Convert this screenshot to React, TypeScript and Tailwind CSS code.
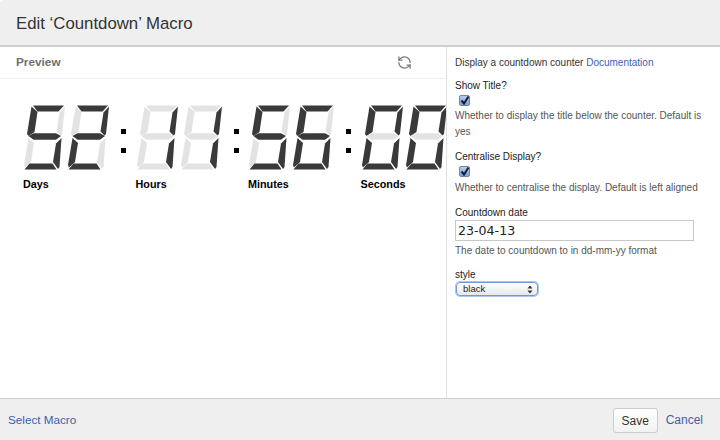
import React from "react";
import { RefreshCcw } from "lucide-react";

const SEG: Record<string, string> = {
  a: "9,0.5 40,0.5 34.5,6.5 13.5,6.5",
  f: "7.5,1.5 13.5,7 10.5,27 4.5,31 3,29",
  b: "41,1.5 35.5,7.5 32.5,26.5 36.5,30.5 38,29",
  g: "4.5,31 9.5,28.2 32,28.2 37,31 32,34.8 9.5,34.8",
  e: "4.5,33 10,38 7,57 1,62.5 0,60",
  c: "37.5,33 32,38.5 29,57 34,64 35.5,62",
  d: "0.5,64.5 5.5,58.5 28.5,58.5 32.5,64.5",
};
const DIGITS: Record<string, string> = {
  "0": "abcdef",
  "1": "bc",
  "2": "abged",
  "5": "afgcd",
  "6": "afgecd",
};

function Digit({ value }: { value: string }) {
  const on = DIGITS[value];
  return (
    <svg width="41" height="65" viewBox="0 0 41 65" className="shrink-0">
      {Object.keys(SEG).map((k) => (
        <polygon key={k} points={SEG[k]} fill={on.includes(k) ? "#3a3a3a" : "#e3e3e3"} />
      ))}
    </svg>
  );
}

function Group({ value, label, colon }: { value: string; label: string; colon: boolean }) {
  return (
    <div className="flex shrink-0 w-[112.5px]">
      <div className="w-[88px] shrink-0">
        <div className="flex gap-[3px]">
          <Digit value={value[0]} />
          <Digit value={value[1]} />
        </div>
        <div className="mt-[7px] -ml-px text-[10.8px] leading-[14px] font-bold text-black">{label}</div>
      </div>
      {colon && (
        <div className="flex flex-col shrink-0 w-[24.5px] pl-[9px] pt-[24px] gap-[14px]">
          <div className="w-[5px] h-[5px] bg-black" />
          <div className="w-[5px] h-[5px] bg-black" />
        </div>
      )}
    </div>
  );
}

function Check() {
  return (
    <div className="ml-1 w-[11px] h-[11px] rounded-[2px] border border-[#6f86b0] bg-gradient-to-b from-[#b9cbe8] to-[#7f9fd4] flex items-center justify-center">
      <svg width="11" height="11" viewBox="0 0 11 11" className="shrink-0">
        <path d="M2.5 5.5 L5 8.5 L9.5 1.5" fill="none" stroke="#10203a" strokeWidth="2" />
      </svg>
    </div>
  );
}

export default function App() {
  return (
    <div
      className="w-[720px] h-[440px] flex flex-col bg-white overflow-hidden text-[#333]"
      style={{ fontFamily: '"Liberation Sans", Arial, sans-serif' }}
    >
      <div className="h-[47px] shrink-0 bg-[#efefef] border-b-2 border-[#cfcfcf] pl-4 pt-[3px] flex items-center rounded-tl-[4px]">
        <h1 className="text-[16.8px] leading-[24px] text-[#333]">Edit ‘Countdown’ Macro</h1>
      </div>
      <div className="flex-1 flex min-h-0">
        <div className="w-[446px] shrink-0 overflow-hidden flex flex-col">
          <div className="h-[32px] shrink-0 border-b border-[#eeeeee] pl-4 pr-[34px] flex items-center justify-between">
            <span className="text-[11.8px] font-bold text-[#707070]">Preview</span>
            <RefreshCcw size={15} strokeWidth={2} color="#777777" />
          </div>
          <div className="flex pl-6 pt-[26px]">
            <Group value="52" label="Days" colon />
            <Group value="11" label="Hours" colon />
            <Group value="56" label="Minutes" colon />
            <Group value="00" label="Seconds" colon={false} />
          </div>
        </div>
        <div className="flex-1 border-l border-[#e0e0e0] pl-2 pt-[8px] text-[10px] leading-[16px]">
          <p className="text-[#333]">
            Display a countdown counter <a className="text-[#3b5fb0]">Documentation</a>
          </p>
          <div className="mt-[7px] text-[#222]">Show Title?</div>
          <div className="mt-[1px]">
            <Check />
          </div>
          <p className="mt-[2px] pr-4 text-[#555]">Whether to display the title below the counter. Default is yes</p>
          <div className="mt-[9px] text-[#222]">Centralise Display?</div>
          <div className="mt-[1px]">
            <Check />
          </div>
          <p className="mt-[3px] text-[#555] whitespace-nowrap">Whether to centralise the display. Default is left aligned</p>
          <div className="mt-[9px] text-[#222]">Countdown date</div>
          <input
            readOnly
            value="23-04-13"
            className="block -mt-px w-[239px] h-[21px] border border-[#c8c8c8] bg-white px-[2px] text-[12.6px] text-[#222] outline-none"
            style={{ fontFamily: '"DejaVu Sans", sans-serif' }}
          />
          <p className="mt-[2px] text-[#555]">The date to countdown to in dd-mm-yy format</p>
          <div className="mt-[10px] text-[#222] leading-[12px]">style</div>
          <div className="mt-[1px] ml-px w-[82px] h-[14px] rounded-[4px] border border-[#6d9ad8] bg-gradient-to-b from-[#ffffff] to-[#e8e8e8] shadow-[0_0_0_1px_#a9c6ee] pl-[6px] pr-1 flex items-center justify-between text-[9.5px] text-[#222]">
            <span>black</span>
            <svg width="6" height="9" viewBox="0 0 6 9">
              <path d="M3 0.5 L5.5 3.5 H0.5 Z M3 8.5 L5.5 5.5 H0.5 Z" fill="#333" />
            </svg>
          </div>
        </div>
      </div>
      <div className="h-[42px] shrink-0 bg-[#efefef] border-t border-[#cfcfcf] pl-2 pr-[17px] pt-px flex items-center justify-between text-[12px]">
        <a className="text-[11.7px] text-[#3b5fb0]">Select Macro</a>
        <div className="flex items-center gap-2">
          <button className="mt-px h-[25px] w-[45px] rounded-[3px] border border-[#ccc] bg-gradient-to-b from-white to-[#f2f2f2] text-[#333] text-[12px]">
            Save
          </button>
          <a className="text-[#3b5fb0]">Cancel</a>
        </div>
      </div>
    </div>
  );
}
